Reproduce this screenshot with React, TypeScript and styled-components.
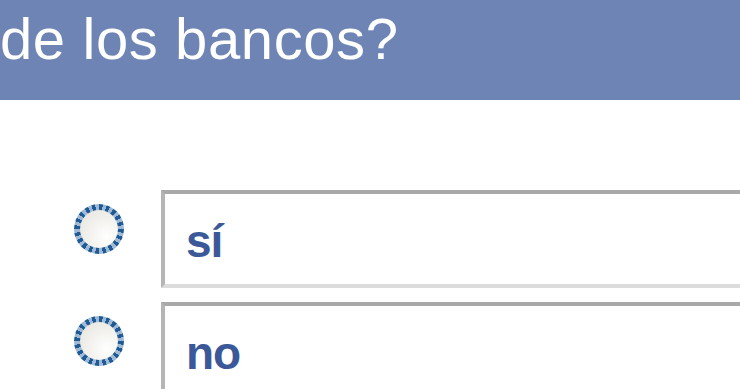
import styled, { createGlobalStyle } from "styled-components";

const GlobalStyle = createGlobalStyle`
  html, body {
    margin: 0;
    padding: 0;
    background: #ffffff;
    overflow: hidden;
  }
`;

const Page = styled.div`
  width: 740px;
  height: 389px;
  overflow: hidden;
  background: #ffffff;
`;

const Header = styled.div`
  height: 100px;
  background-color: #6d84b4;
  display: flex;
  align-items: flex-start;
`;

const Question = styled.h2`
  margin: 0;
  padding: 4px 0 0 0;
  color: #ffffff;
  font-family: "Liberation Sans", Arial, sans-serif;
  font-weight: 400;
  font-size: 58px;
  letter-spacing: 0.6px;
  line-height: 70px;
  white-space: nowrap;
`;

const Options = styled.div`
  display: flex;
  flex-direction: column;
  gap: 14px;
  padding: 90px 0 0 74px;
`;

const Row = styled.label`
  display: flex;
  align-items: flex-start;
  gap: 37px;
`;

const Radio = styled.span`
  flex: none;
  box-sizing: border-box;
  width: 50px;
  height: 50px;
  margin-top: 14px;
  padding: 6px;
  border-radius: 50%;
  background: repeating-conic-gradient(#1f5a95 0deg 9deg, #9db9d6 9deg 18deg);
`;

const RadioFill = styled.span`
  display: block;
  width: 100%;
  height: 100%;
  border-radius: 50%;
  background: radial-gradient(circle at 70% 70%, #ffffff 0%, #f3f2ee 45%, #e3e2dc 100%);
`;

const Choice = styled.div`
  flex: none;
  box-sizing: border-box;
  width: 640px;
  height: 98px;
  border-top: 4px solid #a9a9a9;
  border-left: 4px solid #b5b5b5;
  border-bottom: 4px solid #dcdcdc;
  border-right: 4px solid #dcdcdc;
  background: #ffffff;
  padding: 0 0 0 21px;
  display: flex;
  align-items: center;
`;

const ChoiceText = styled.span`
  color: #3b5998;
  font-family: "Liberation Sans", Arial, sans-serif;
  font-weight: 700;
  font-size: 46px;
  letter-spacing: -1px;
  line-height: 1;
  margin-top: 4px;
`;

const choices = ["sí", "no"];

function App() {
  return (
    <Page>
      <GlobalStyle />
      <Header>
        <Question>de los bancos?</Question>
      </Header>
      <Options>
        {choices.map((c) => (
          <Row key={c}>
            <Radio>
              <RadioFill />
            </Radio>
            <Choice>
              <ChoiceText>{c}</ChoiceText>
            </Choice>
          </Row>
        ))}
      </Options>
    </Page>
  );
}

export default App;
